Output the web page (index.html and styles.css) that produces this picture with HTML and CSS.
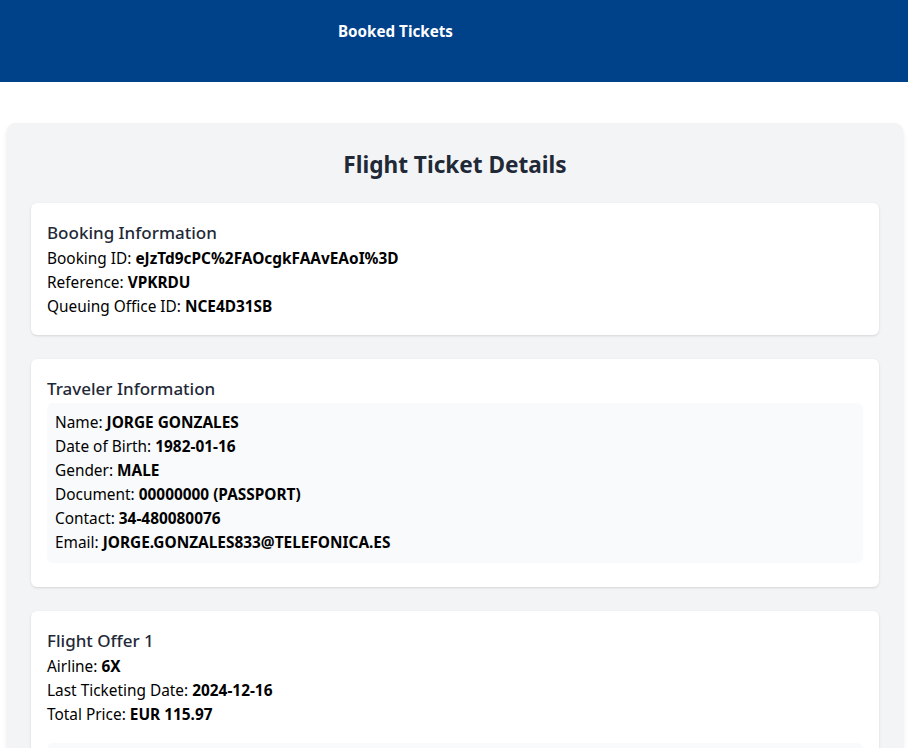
FILE: index.html
```html
<!DOCTYPE html>
<html>
<head>
<meta charset="utf-8">
<link rel="stylesheet" href="styles.css">
</head>
<body>
<header class="topbar">
  <h1 class="topbar-title">Booked Tickets</h1>
</header>
<main class="panel">
  <h2 class="panel-title">Flight Ticket Details</h2>
  <section class="card">
    <h3 class="card-title">Booking Information</h3>
    <p class="row">Booking ID: <b>eJzTd9cPC%2FAOcgkFAAvEAoI%3D</b></p>
    <p class="row">Reference: <b>VPKRDU</b></p>
    <p class="row">Queuing Office ID: <b>NCE4D31SB</b></p>
  </section>
  <section class="card">
    <h3 class="card-title">Traveler Information</h3>
    <div class="inner">
      <p class="row">Name: <b>JORGE GONZALES</b></p>
      <p class="row">Date of Birth: <b>1982-01-16</b></p>
      <p class="row">Gender: <b>MALE</b></p>
      <p class="row">Document: <b>00000000 (PASSPORT)</b></p>
      <p class="row">Contact: <b>34-480080076</b></p>
      <p class="row">Email: <b>JORGE.GONZALES833@TELEFONICA.ES</b></p>
    </div>
  </section>
  <section class="card">
    <h3 class="card-title">Flight Offer 1</h3>
    <p class="row">Airline: <b>6X</b></p>
    <p class="row">Last Ticketing Date: <b>2024-12-16</b></p>
    <p class="row">Total Price: <b>EUR 115.97</b></p>
    <div class="inner inner-offer"></div>
  </section>
</main>
</body>
</html>
```

FILE: styles.css
```css
html, body {
  margin: 0;
  padding: 0;
  background: #ffffff;
  font-family: "Noto Sans", "Open Sans", sans-serif;
  color: #000;
}
.topbar {
  background: #00428a;
  height: 82px;
  box-sizing: border-box;
  padding: 19px 0 0 338px;
}
.topbar-title {
  margin: 0;
  font-size: 15.2px;
  line-height: 24px;
  font-weight: 700;
  color: #ffffff;
}
.panel {
  width: 896px;
  box-sizing: border-box;
  margin: 41px 0 0 7px;
  padding: 24px;
  background: #f3f4f6;
  border-radius: 8px;
  box-shadow: 0 4px 6px -1px rgba(0,0,0,0.1), 0 2px 4px -2px rgba(0,0,0,0.1);
  display: flex;
  flex-direction: column;
  gap: 24px;
}
.panel-title {
  margin: 0 0 -4px;
  text-align: center;
  font-size: 22.6px;
  line-height: 36px;
  font-weight: 700;
  color: #1f2937;
}
.card {
  background: #ffffff;
  border-radius: 6px;
  padding: 16px;
  box-shadow: 0 1px 3px 0 rgba(0,0,0,0.1), 0 1px 2px -1px rgba(0,0,0,0.1);
}
.card-title {
  margin: 0;
  font-size: 17px;
  line-height: 28px;
  font-weight: 500;
  color: #1f2937;
}
.row {
  margin: 0;
  font-size: 15.4px;
  line-height: 24px;
}
.row b {
  font-weight: 700;
}
.inner {
  background: #f9fafb;
  border-radius: 6px;
  padding: 8px;
  margin-bottom: 8px;
}
.inner-offer {
  margin-top: 16px;
  height: 120px;
}
```
